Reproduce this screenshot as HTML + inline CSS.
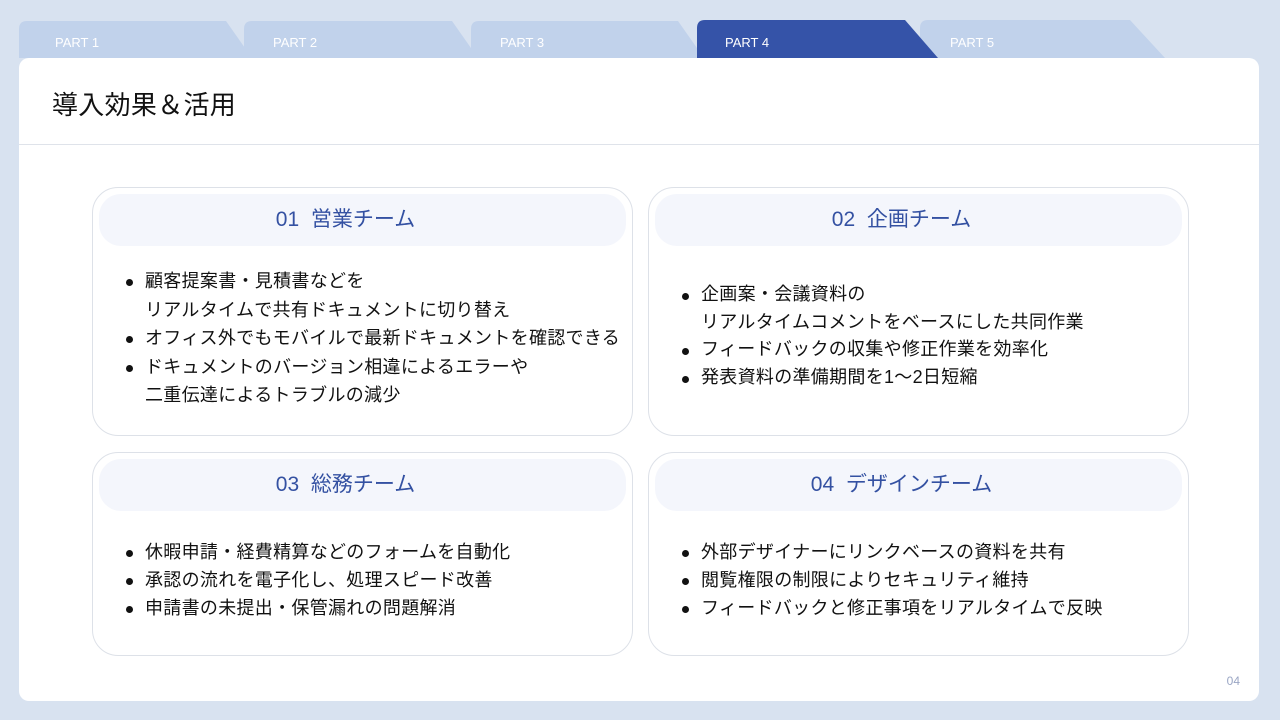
<!DOCTYPE html><html><head><meta charset="utf-8"><style>
*{margin:0;padding:0;box-sizing:border-box}
body{width:1280px;height:720px;background:#d8e2f0;font-family:"Liberation Sans","Noto Sans CJK JP",sans-serif;position:relative;overflow:hidden}
.tabs{position:absolute;left:0;top:0}
.tl{position:absolute;top:35px;font-size:13px;color:#fff}
.panel{position:absolute;left:19px;top:58px;width:1240px;height:643px;background:#fff;border-radius:10px}
.title{position:absolute;left:33px;top:27px;font-size:26px;letter-spacing:0.3px;color:#111}
.hr{position:absolute;left:0;right:0;top:86px;height:1px;background:#dfe3ea}
.card{position:absolute;width:541px;border:1px solid #dde1e8;border-radius:26px;background:#fff}
.hd{position:absolute;left:6px;right:6px;top:6px;height:52px;border-radius:22px;background:#f4f6fc;text-align:center;line-height:52px;font-size:21px;color:#3451a2;padding-right:34px}
ul{position:absolute;left:33px;list-style:none;font-size:18px;letter-spacing:0.3px;color:#111;line-height:28.5px;white-space:nowrap}
li{position:relative;padding-left:19px}
li:before{content:"";position:absolute;left:0;top:12px;width:7px;height:7px;border-radius:50%;background:#111}
.pg{position:absolute;right:19px;bottom:13px;font-size:12px;color:#9aa6c4}
</style></head><body>
<svg class="tabs" width="1280" height="60">
<path d="M19 58V29Q19 21 27 21H226L252 58Z" fill="#c1d2eb"/>
<path d="M244 58V29Q244 21 252 21H452L478 58Z" fill="#c1d2eb"/>
<path d="M471 58V29Q471 21 479 21H678L704 58Z" fill="#c1d2eb"/>
<path d="M920 58V28Q920 20 928 20H1130L1165 58Z" fill="#c1d2eb"/>
<path d="M697 58V28Q697 20 705 20H905L938 58Z" fill="#3553a8"/>
</svg>
<div class="tl" style="left:55px">PART 1</div>
<div class="tl" style="left:273px">PART 2</div>
<div class="tl" style="left:500px">PART 3</div>
<div class="tl" style="left:725px">PART 4</div>
<div class="tl" style="left:950px">PART 5</div>
<div class="panel">
<div class="title">導入効果＆活用</div>
<div class="hr"></div>
<div class="card" style="left:73px;top:129px;height:249px"><div class="hd">01&nbsp; 営業チーム</div>
<ul style="top:79px"><li>顧客提案書・見積書などを<br>リアルタイムで共有ドキュメントに切り替え</li><li>オフィス外でもモバイルで最新ドキュメントを確認できる</li><li>ドキュメントのバージョン相違によるエラーや<br>二重伝達によるトラブルの減少</li></ul></div>
<div class="card" style="left:629px;top:129px;height:249px"><div class="hd">02&nbsp; 企画チーム</div>
<ul style="top:93px;line-height:27.5px"><li>企画案・会議資料の<br>リアルタイムコメントをベースにした共同作業</li><li>フィードバックの収集や修正作業を効率化</li><li>発表資料の準備期間を1〜2日短縮</li></ul></div>
<div class="card" style="left:73px;top:394px;height:204px"><div class="hd">03&nbsp; 総務チーム</div>
<ul style="top:85px;line-height:28px"><li>休暇申請・経費精算などのフォームを自動化</li><li>承認の流れを電子化し、処理スピード改善</li><li>申請書の未提出・保管漏れの問題解消</li></ul></div>
<div class="card" style="left:629px;top:394px;height:204px"><div class="hd">04&nbsp; デザインチーム</div>
<ul style="top:85px;line-height:28px"><li>外部デザイナーにリンクベースの資料を共有</li><li>閲覧権限の制限によりセキュリティ維持</li><li>フィードバックと修正事項をリアルタイムで反映</li></ul></div>
<div class="pg">04</div>
</div>
</body></html>
